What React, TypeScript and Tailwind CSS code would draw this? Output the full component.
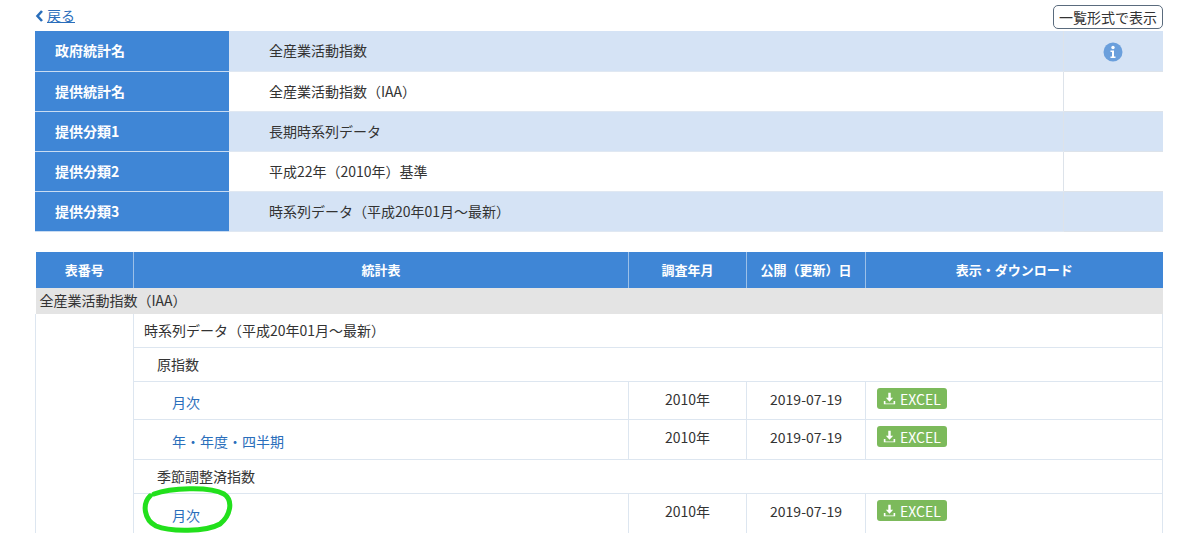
import React from "react";

const font = { fontFamily: '"Noto Sans CJK JP", "Noto Sans", sans-serif' };

const info = [
  ["政府統計名", "全産業活動指数"],
  ["提供統計名", "全産業活動指数（IAA）"],
  ["提供分類1", "長期時系列データ"],
  ["提供分類2", "平成22年（2010年）基準"],
  ["提供分類3", "時系列データ（平成20年01月～最新）"],
];

const Excel = () => (
  <span className="inline-flex items-center gap-1 rounded-[3px] bg-[#7cba5b] px-[6px] h-[21px] text-[14px] text-white leading-none">
    <svg width="13" height="13" viewBox="0 0 16 16" fill="white">
      <path d="M6.5 1h3v6h3l-4.5 5L3.5 7h3z" />
      <path d="M1 11h2v3h10v-3h2v4H1z" />
    </svg>
    EXCEL
  </span>
);

type Row =
  | { kind: "label"; text: string; indent: number; h: number }
  | { kind: "link"; text: string; h: number };

const rows: Row[] = [
  { kind: "label", text: "時系列データ（平成20年01月～最新）", indent: 10, h: 34 },
  { kind: "label", text: "原指数", indent: 23, h: 34 },
  { kind: "link", text: "月次", h: 38 },
  { kind: "link", text: "年・年度・四半期", h: 40 },
  { kind: "label", text: "季節調整済指数", indent: 23, h: 34 },
  { kind: "link", text: "月次", h: 40 },
];

export default function App() {
  return (
    <div className="relative w-[1200px] h-[533px] overflow-hidden bg-white text-[14px] text-[#333]" style={font}>
      <div className="flex items-end justify-between pl-[35px] pr-[37px] h-[31px] pb-[5px]">
        <a className="flex items-center gap-[2px] text-[#2a6ebb] underline text-[14px]">
          <svg width="10" height="12" viewBox="0 0 10 12"><path d="M7 1L2.5 6 7 11" stroke="#2a6ebb" strokeWidth="2.6" fill="none" /></svg>
          戻る
        </a>
        <span className="border border-[#5a6b7d] rounded-[5px] px-[5px] text-[14px] leading-[22px] text-[#333] -mb-[3px] bg-white">一覧形式で表示</span>
      </div>
      <table className="ml-[35px] w-[1128px] border-collapse table-fixed">
        <colgroup>
          <col className="w-[194px]" />
          <col />
          <col className="w-[100px]" />
        </colgroup>
        <tbody>
          {info.map(([k, v], i) => (
            <tr key={k} className={i % 2 === 0 ? "bg-[#d5e3f5]" : "bg-white"}>
              <td className="h-[40px] bg-[#3f86d6] text-white font-bold pl-[20px] border-b border-[#c9dcf2]">{k}</td>
              <td className="pl-[40px] border-b border-[#e0e8f2]">{v}</td>
              <td className="border-l border-b border-[#dde3ea] text-center">
                {i === 0 && (
                  <svg className="inline" width="20" height="20" viewBox="0 0 20 20">
                    <circle cx="10" cy="10" r="9.5" fill="#6a9fdc" />
                    <circle cx="10" cy="5.5" r="1.7" fill="white" />
                    <path d="M7.5 8.5h3.5v6h1.5v1.5h-5v-1.5h1.5v-4.5h-1.5z" fill="white" />
                  </svg>
                )}
              </td>
            </tr>
          ))}
        </tbody>
      </table>
      <table className="ml-[35px] mt-[20px] w-[1128px] border-collapse table-fixed">
        <colgroup>
          <col className="w-[98px]" />
          <col className="w-[495px]" />
          <col className="w-[118px]" />
          <col className="w-[119px]" />
          <col />
        </colgroup>
        <thead>
          <tr className="bg-[#3f86d6] text-white font-bold text-[13px]">
            <th className="h-[36px]">表番号</th>
            <th className="border-l border-[#9cc0e8]">統計表</th>
            <th className="border-l border-[#9cc0e8]">調査年月</th>
            <th className="border-l border-[#9cc0e8]">公開（更新）日</th>
            <th className="border-l border-[#9cc0e8]">表示・ダウンロード</th>
          </tr>
        </thead>
        <tbody>
          <tr className="bg-[#e4e4e4]">
            <td colSpan={5} className="h-[26px] pl-[4px] text-[14px]">全産業活動指数（IAA）</td>
          </tr>
          {rows.map((r, i) => (
            <tr key={i}>
              {i === 0 && <td rowSpan={rows.length} className="border-l border-r border-[#dde6f0]" />}
              {r.kind === "label" ? (
                <td colSpan={4} style={{ height: r.h, paddingLeft: r.indent }} className="border-b border-r border-[#dde6f0]">
                  {r.text}
                </td>
              ) : (
                <>
                  <td style={{ height: r.h }} className="pl-[38px] pt-[4px] text-[#2a6ebb] border-b border-r border-[#dde6f0]">{r.text}</td>
                  <td className="text-center border-b border-r border-[#dde6f0] align-top pt-[7px]">2010年</td>
                  <td className="text-center border-b border-r border-[#dde6f0] align-top pt-[7px]">2019-07-19</td>
                  <td className="pl-[11px] border-b border-r border-[#dde6f0] align-top pt-[6px]"><Excel /></td>
                </>
              )}
            </tr>
          ))}
        </tbody>
      </table>
      <svg className="absolute left-[140px] top-[484px]" width="96" height="52" viewBox="0 0 96 52">
        <path d="M14 10C30 4 70 2 84 10c10 7 6 22-4 30-14 8-50 8-64 2C4 36 2 20 10 12" fill="none" stroke="#22e01c" strokeWidth="5" strokeLinecap="round" />
      </svg>
    </div>
  );
}
